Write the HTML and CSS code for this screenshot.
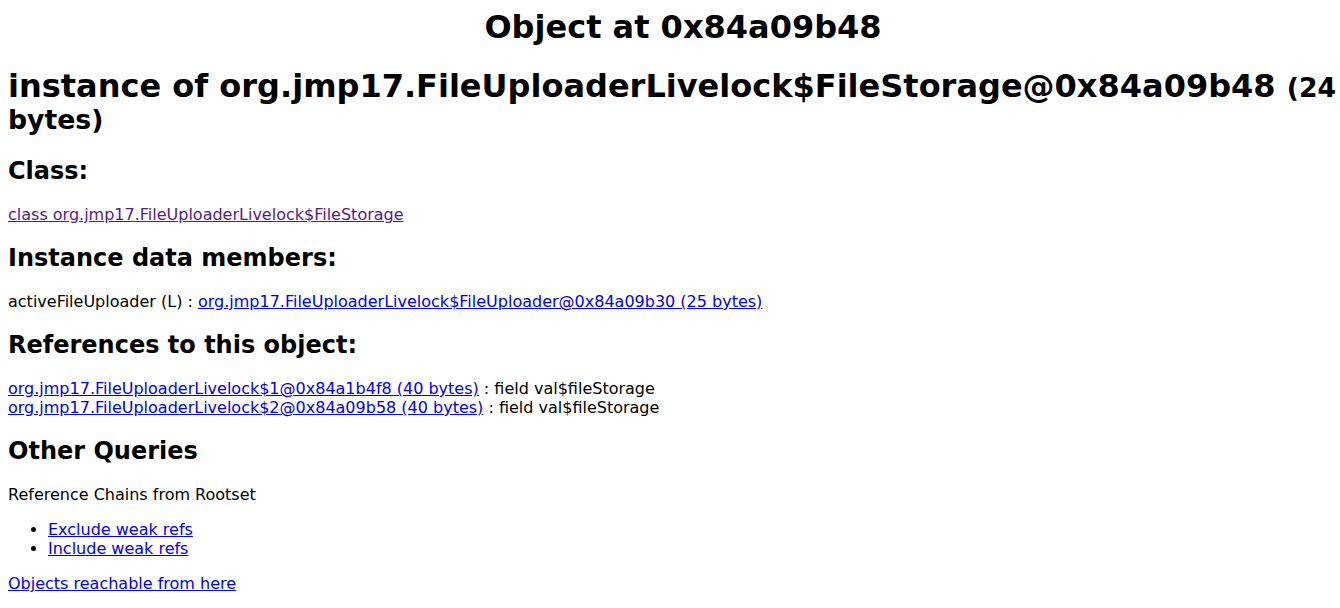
FILE: index.html
```html
<!DOCTYPE html>
<html>
<head>
<meta charset="utf-8">
<title>Object at 0x84a09b48</title>
<link rel="stylesheet" href="styles.css">
</head>
<body class="page">
<h1 class="title">Object at 0x84a09b48</h1>
<h1 class="instance">instance of org.jmp17.FileUploaderLivelock$FileStorage@0x84a09b48 <span class="size">(24 bytes)</span></h1>
<h2 class="section">Class:</h2>
<a class="link visited" href="#class">class org.jmp17.FileUploaderLivelock$FileStorage</a>
<h2 class="section">Instance data members:</h2>
<div class="line">activeFileUploader (L) : <a class="link" href="#uploader">org.jmp17.FileUploaderLivelock$FileUploader@0x84a09b30 (25 bytes)</a></div>
<h2 class="section">References to this object:</h2>
<div class="line"><a class="link" href="#r1">org.jmp17.FileUploaderLivelock$1@0x84a1b4f8 (40 bytes)</a> : field val$fileStorage</div>
<div class="line"><a class="link" href="#r2">org.jmp17.FileUploaderLivelock$2@0x84a09b58 (40 bytes)</a> : field val$fileStorage</div>
<h2 class="section">Other Queries</h2>
<div class="line">Reference Chains from Rootset</div>
<ul class="queries">
<li><a class="link" href="#exclude">Exclude weak refs</a></li>
<li><a class="link" href="#include">Include weak refs</a></li>
</ul>
<a class="link" href="#reachable">Objects reachable from here</a>
</body>
</html>
```
FILE: styles.css
```css
html {
  background: #ffffff;
  overflow: hidden;
}
.page {
  margin: 8px;
  width: 1350px;
  font-family: "DejaVu Sans", sans-serif;
  font-size: 16px;
  color: #000000;
}
.title {
  text-align: center;
  font-size: 32px;
  margin: 0 0 21px;
}
.instance {
  font-size: 32px;
  line-height: 30px;
  margin: 25px 0 22px;
}
.size {
  font-size: 26.67px;
}
.section {
  font-size: 24px;
  margin: 20px 0;
}
.link {
  color: #0000ee;
  text-decoration: underline;
}
.visited {
  color: #551a8b;
}
.queries {
  margin: 16px 0;
  padding-left: 40px;
}
```
